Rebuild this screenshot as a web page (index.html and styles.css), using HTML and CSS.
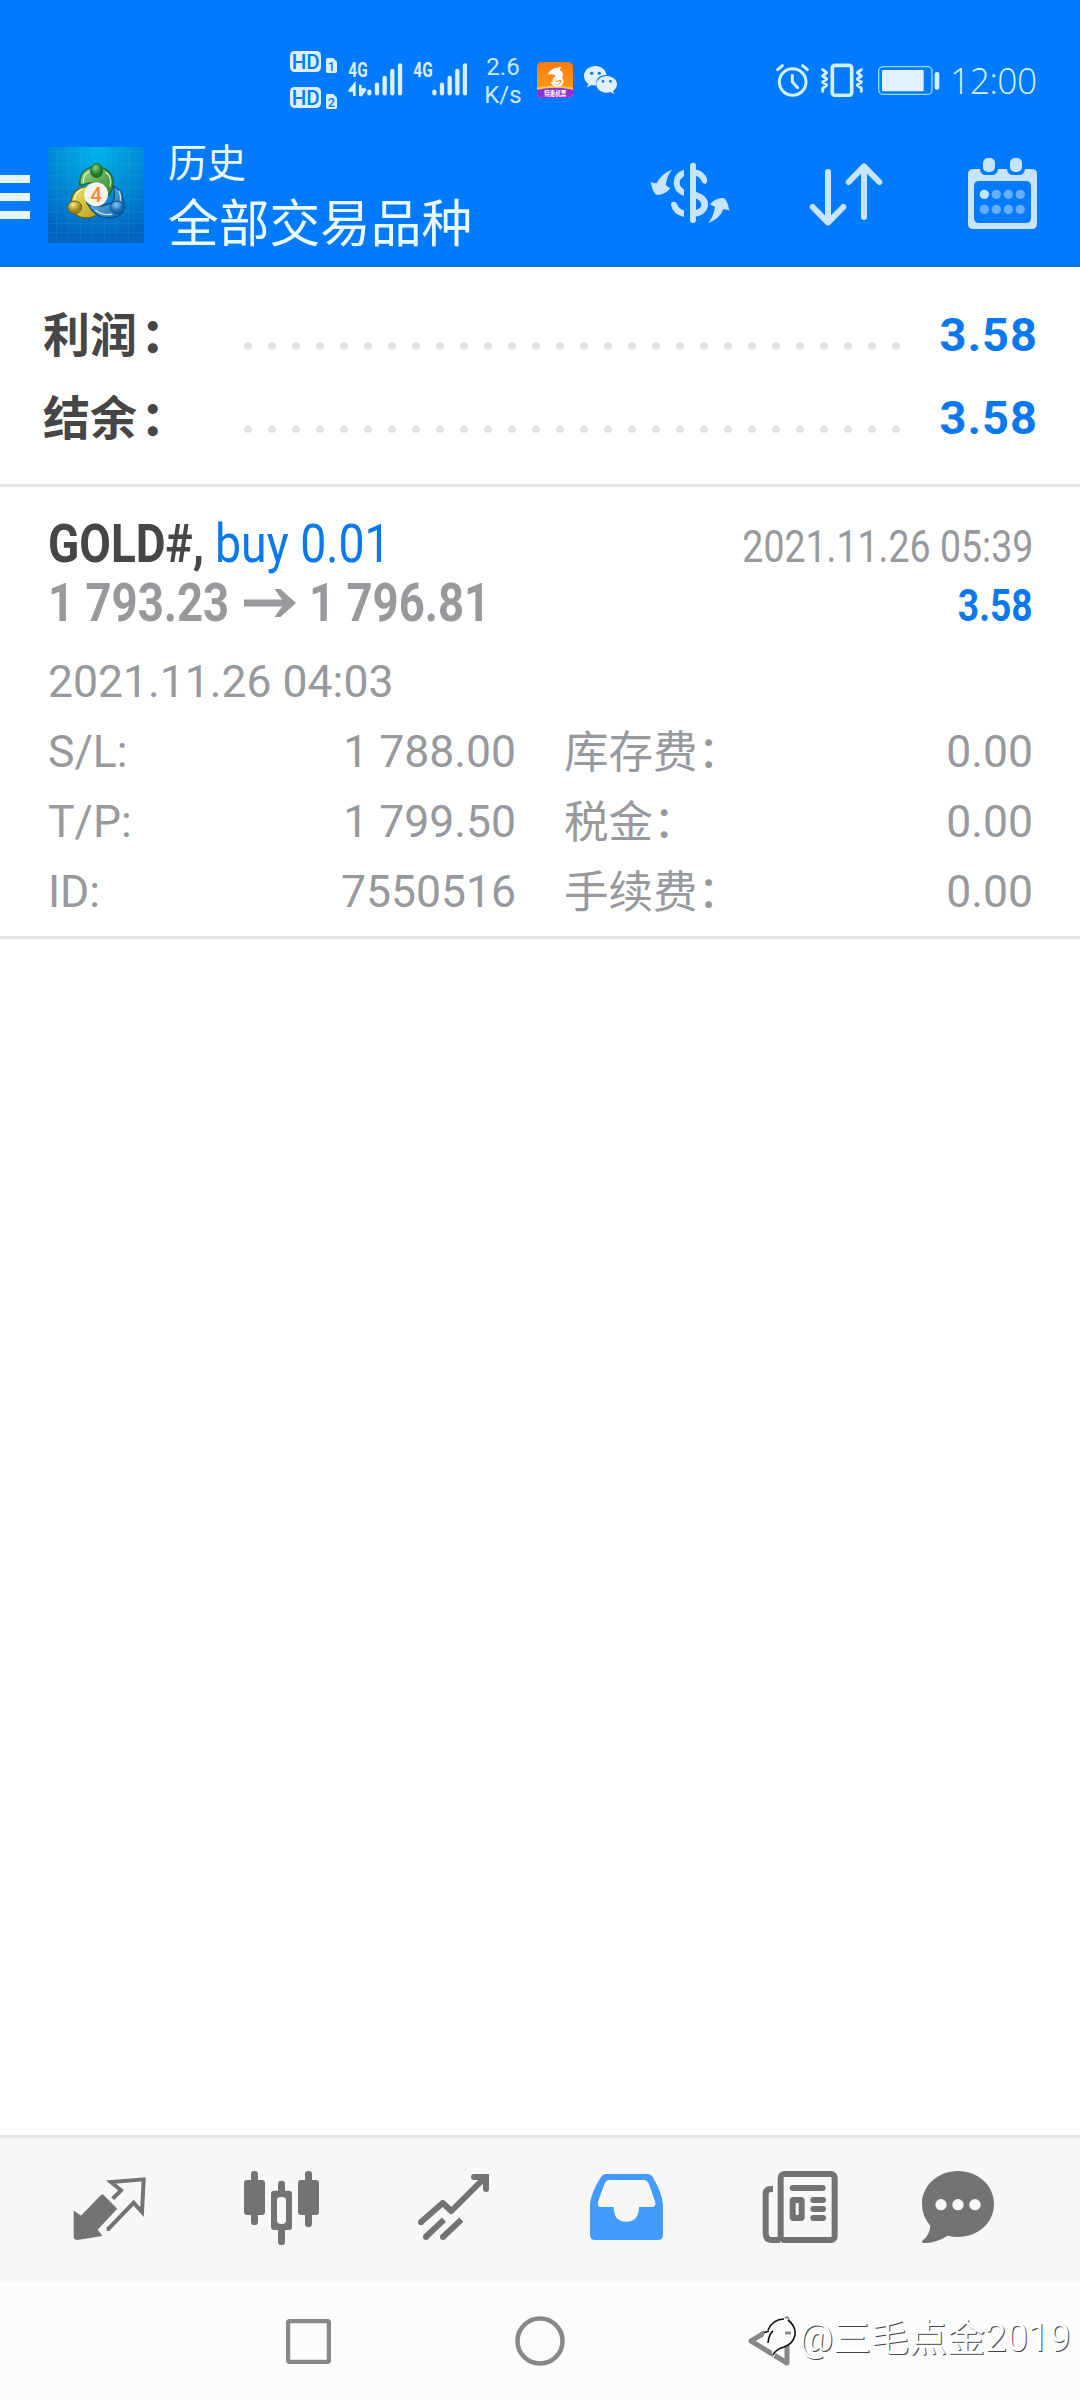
FILE: index.html
```html
<!DOCTYPE html>
<html lang="zh-CN">
<head>
<meta charset="utf-8">
<title>历史</title>
<link rel="stylesheet" href="styles.css">
</head>
<body>
<div class="screen">
  <div class="statusbar">
    <svg class="signals" width="177" height="60" viewBox="60 30 531 180">
      <g fill="#dcefff">
        <rect x="60" y="33" width="93" height="63" rx="14"/>
        <rect x="60" y="141" width="93" height="63" rx="14"/>
        <path d="M172 54h18l11 12v28q0 5-5 5h-23q-5 0-5-5V59q0-5 4-5z"/>
        <path d="M172 162h18l11 12v28q0 5-5 5h-23q-5 0-5-5v-35q0-5 4-5z"/>
      </g>
      <g class="hd" fill="#007aff">
        <text x="65" y="86" font-size="59" textLength="84" lengthAdjust="spacingAndGlyphs">HD</text>
        <text x="65" y="194" font-size="59" textLength="84" lengthAdjust="spacingAndGlyphs">HD</text>
        <text x="173" y="93" font-size="38">1</text>
        <text x="173" y="200" font-size="38">2</text>
      </g>
      <g class="net" fill="#dcefff">
        <text x="235" y="112" font-size="58" textLength="58" lengthAdjust="spacingAndGlyphs">4G</text>
        <text x="430" y="112" font-size="58" textLength="58" lengthAdjust="spacingAndGlyphs">4G</text>
      </g>
      <path d="M237 155l16-21v34M271 134v34M271 168l16-21" fill="none" stroke="#dcefff" stroke-width="8"/>
      <path d="M237 147h16v8h-16zM271 145h16v8h-16z" fill="#dcefff"/>
      <g stroke="#dcefff" stroke-width="13" stroke-linecap="round">
        <path d="M298 155v5M321 134v26M344 114v46M367 93v67M390 76v84"/>
        <path d="M493 155v5M516 134v26M539 114v46M562 93v67M585 76v84"/>
      </g>
    </svg>
    <div class="rate"><span>2.6</span><span>K/s</span></div>
    <svg class="app" width="36" height="36" viewBox="0 0 108 108">
      <defs><linearGradient id="trip" x2="0" y2="1"><stop offset="0" stop-color="#f97a10"/><stop offset="1" stop-color="#ffa51c"/></linearGradient>
      <clipPath id="tripclip"><rect width="108" height="108" rx="15"/></clipPath></defs>
      <g clip-path="url(#tripclip)">
        <rect width="108" height="108" fill="url(#trip)"/>
        <path d="M0 78q54-15 108 0v30H0z" fill="#ffc65c"/>
        <path d="M0 83q54-12 108 0v25H0z" fill="#8a35d8"/>
      </g>
      <path d="M32 38Q40 18 62 17l11-3-5 9q14 8 8 24-3 7-11 8-7 1-10 6 3-12-1-22-10-4-22-1z" fill="#fff"/>
      <path d="M64 45q-16 1-14 15 9 8 18-1M64 46q14 4 12 15-5 11-17 10-13-1-14-11" fill="none" stroke="#fff" stroke-width="6"/>
      <text class="trip" x="22" y="101" font-size="20" textLength="66" lengthAdjust="spacingAndGlyphs" fill="#fff">特惠机票</text>
    </svg>
    <svg class="wechat" width="33" height="28" viewBox="0 0 99 84">
      <path d="M35 0C15 0 0 13 0 30c0 10 5 18 13 23l-4 11 14-7q7 2 15 1C32 37 49 26 68 27 65 11 51 0 35 0z" fill="#e2f1ff"/>
      <path d="M68 30c-18 0-31 11-31 25s13 25 31 25q6 0 11-2l11 6-3-9c8-5 12-12 12-20 0-14-13-25-31-25z" fill="#e2f1ff"/>
      <g fill="#007aff"><circle cx="23" cy="22" r="5"/><circle cx="46" cy="22" r="5"/><circle cx="57" cy="46" r="4"/><circle cx="79" cy="46" r="4"/></g>
    </svg>
    <svg class="alarm" width="33" height="34" viewBox="48 66 99 102" fill="none" stroke="#d3f0ff" stroke-width="9" stroke-linecap="round" stroke-linejoin="round">
      <circle cx="98" cy="123" r="40"/><path d="M97 103v20l16 17M53 86l14-12M142 86l-14-12"/>
    </svg>
    <svg class="vibrate" width="44" height="34" viewBox="180 66 132 102" fill="none" stroke="#d3f0ff" stroke-linecap="round" stroke-linejoin="round">
      <rect x="217" y="73" width="58" height="90" rx="8" stroke-width="11"/>
      <path d="M188 86l12 9-12 10 12 9-12 9 12 9-12 10 0 9M304 86l-12 9 12 10-12 9 12 9-12 9 12 10v9" stroke-width="9"/>
    </svg>
    <svg class="battery" width="62" height="29" viewBox="355 74 186 87">
      <rect x="357" y="76" width="160" height="83" rx="13" fill="none" stroke="#9dd3ff" stroke-width="4"/>
      <rect x="367" y="86" width="125" height="64" rx="3" fill="#e2f1ff"/><rect x="525" y="92" width="14" height="53" rx="6" fill="#d3f0ff"/>
    </svg>
    <div class="clock">12:00</div>
  </div>

  <header class="header">
    <div class="menu"><i></i><i></i><i></i></div>
    <svg class="logo" width="96" height="96" viewBox="144 51 288 288">
      <defs>
        <radialGradient id="sky" gradientUnits="userSpaceOnUse" cx="290" cy="60" r="270"><stop offset="0" stop-color="#00b4ec"/><stop offset=".45" stop-color="#008fd8"/><stop offset="1" stop-color="#0064c0"/></radialGradient>
        <linearGradient id="lg" x2="1" y2="1"><stop offset="0" stop-color="#a5d68c"/><stop offset="1" stop-color="#27842c"/></linearGradient>
        <linearGradient id="ly" x2="1" y2="1"><stop offset="0" stop-color="#f4e96b"/><stop offset="1" stop-color="#b79b1c"/></linearGradient>
        <linearGradient id="lb" x2="1" y2="1"><stop offset="0" stop-color="#7cc5ef"/><stop offset="1" stop-color="#1068b4"/></linearGradient>
        <radialGradient id="bg" cx=".4" cy=".3"><stop offset="0" stop-color="#8fd07c"/><stop offset="1" stop-color="#1d7a26"/></radialGradient>
        <radialGradient id="by" cx=".4" cy=".3"><stop offset="0" stop-color="#f3e982"/><stop offset="1" stop-color="#99851a"/></radialGradient>
        <radialGradient id="bb" cx=".4" cy=".3"><stop offset="0" stop-color="#83cdf5"/><stop offset="1" stop-color="#1668ae"/></radialGradient>
      </defs>
      <rect x="144" y="51" width="288" height="288" fill="url(#sky)"/>
      <path d="M170 51v288M206 51v288M242 51v288M278 51v288M314 51v288M350 51v288M386 51v288M144 65h288M144 101h288M144 137h288M144 173h288M144 209h288M144 245h288M144 281h288M144 307h288" stroke="#5ac4ee" stroke-opacity=".2" stroke-width="2"/>
      <path d="M262 169q-30 3-42 24-11 22-4 45 12 27 45 26 20-2 29-10l-30-34z" fill="url(#ly)" stroke="#69611a" stroke-width="4"/>
      <path d="M340 168q28 14 29 41 6 24-3 41-20 18-57 12-30-9-43-37l40 3 32-10q10-22 2-50z" fill="url(#lb)" stroke="#0a4f94" stroke-width="4"/>
      <path d="M240 166q-4-34 20-48 26-16 53-2 29 15 26 49-3 22-15 32l-10-26-30-14-25 4z" fill="url(#lg)" stroke="#1b6b25" stroke-width="4"/>
      <path d="M250 160q-1-28 18-35M330 170q8-28-13-43M224 213q0-28 24-36M286 240q22 19 51 12M356 182q8 13 5 32" fill="none" stroke="#e5f5d5" stroke-opacity=".8" stroke-width="4"/>
      <ellipse cx="290" cy="122" rx="18" ry="21" fill="url(#bg)" stroke="#1b6b25" stroke-width="3"/>
      <ellipse cx="224" cy="232" rx="21" ry="19" fill="url(#by)" stroke="#69611a" stroke-width="3"/>
      <ellipse cx="352" cy="232" rx="21" ry="19" fill="url(#bb)" stroke="#0a4f94" stroke-width="3"/>
      <circle cx="288" cy="193" r="36" fill="#f6f3f0"/>
      <text class="four" x="271" y="216" font-size="62" fill="#f58a2c">4</text>
    </svg>
    <div class="titles"><div class="title-sm">历史</div><div class="title-lg">全部交易品种</div></div>
    <svg class="act-money" width="80" height="75" viewBox="60 75 240 225" fill="#c9e4ff">
      <path d="M62 155q8 5 18 5 14-30 46-41-14 14-19 46 6 6 14 10-14 19-39 20-13-2-20-40z"/>
      <path d="M298 242q-8-4-18-4-12 30-46 41 16-17 21-48-6-3-15-8 14-18 39-20 13 4 19 39z"/>
      <path d="M189 107v163" stroke="#c9e4ff" stroke-width="18" stroke-linecap="round"/>
      <path d="M162 119v20q-13 8-13 19 0 12 13 20v20q-31-12-31-40 0-29 31-39zM162 261q-34-8-39-36-1-9 8-10 7 0 10 7 6 16 21 19zM189 117q38 4 43 34 0 8-7 11-7 0-10-8-7-17-26-19zM189 184q44 9 45 39-1 33-45 39v-20q25-3 25-19-1-15-25-20z"/>
    </svg>
    <svg class="act-sort" width="75" height="75" viewBox="534 75 225 225" fill="none" stroke="#c9e4ff" stroke-width="18" stroke-linecap="round" stroke-linejoin="round">
      <path d="M594 126v151M548 231l46 47 46-47M702 261V110M656 156l46-47 46 47"/>
    </svg>
    <svg class="act-cal" width="71" height="75" viewBox="1011 75 213 225">
      <path fill-rule="evenodd" d="M1030 117h20q2 18 18 18h18q16 0 18-18h27q2 18 18 18h18q16 0 18-18h20q16 0 16 16v148q0 16-16 16h-175q-16 0-16-16V133q0-16 16-16zM1048 153q-16 0-16 16v94q0 16 16 16h139q16 0 16-16v-94q0-16-16-16z" fill="#c9e4ff"/>
      <rect x="1059" y="84" width="36" height="42" rx="15" fill="#c9e4ff"/><rect x="1140" y="84" width="36" height="42" rx="15" fill="#c9e4ff"/>
      <circle cx="1063" cy="193" r="14" fill="#c9e4ff"/>
      <g fill="#66aeff"><circle cx="1099" cy="193" r="14"/><circle cx="1135" cy="193" r="14"/><circle cx="1171" cy="193" r="14"/><circle cx="1063" cy="238" r="14"/><circle cx="1099" cy="238" r="14"/><circle cx="1135" cy="238" r="14"/><circle cx="1171" cy="238" r="14"/></g>
    </svg>
  </header>

  <section class="summary">
    <div class="sum-row"><span class="sum-label">利润<b>：</b></span><span class="dots"></span><span class="sum-value">3.58</span></div>
    <div class="sum-row"><span class="sum-label">结余<b>：</b></span><span class="dots"></span><span class="sum-value">3.58</span></div>
  </section>

  <section class="deal">
    <div class="deal-line">
      <div class="side"><span class="symbol">GOLD#,</span><span class="volume">buy 0.01</span></div>
      <span class="close-time">2021.11.26 05:39</span>
    </div>
    <div class="deal-line">
      <div class="side prices"><span class="price">1 793.23</span>
        <svg class="arrow" width="52" height="28" viewBox="0 0 52 28"><path d="M0 10.500h38L30.500 0h6L52 14 36.500 28h-6L38 17.500H0z" fill="#98999d"/></svg>
        <span class="price">1 796.81</span></div>
      <span class="profit">3.58</span>
    </div>
    <div class="open-time">2021.11.26 04:03</div>
    <div class="grid">
      <span>S/L:</span><span class="num">1 788.00</span><span class="cjk">库存费：</span><span class="num">0.00</span>
      <span>T/P:</span><span class="num">1 799.50</span><span class="cjk">税金：</span><span class="num">0.00</span>
      <span>ID:</span><span class="num">7550516</span><span class="cjk">手续费：</span><span class="num">0.00</span>
    </div>
  </section>

  <main class="empty"></main>

  <nav class="tabs">
    <svg class="t1" width="74" height="75" viewBox="99 150 222 225">
      <path d="M190 225l41 41-59 63 14 18-76 12q-8-1-8-8V273l21 15 61-63z" fill="#737373" stroke="#737373" stroke-width="2" stroke-linejoin="round"/>
      <path d="M218 236l25-25-30-25 98-8-5 98-25-28-76 79h-5" fill="none" stroke="#737373" stroke-width="12"/>
    </svg>
    <svg class="t2" width="77" height="75" viewBox="609 150 231 225">
      <g fill="#737373"><rect x="612" y="180" width="63" height="105" rx="9"/><rect x="774" y="180" width="63" height="105" rx="9"/><rect x="633" y="153" width="21" height="162" rx="10"/><rect x="795" y="153" width="21" height="168" rx="10"/><rect x="714" y="182" width="21" height="40" rx="10"/><rect x="714" y="320" width="21" height="55" rx="10"/></g>
      <path fill-rule="evenodd" fill="#737373" d="M702 212h45q9 0 9 9v100q0 9-9 9h-45q-9 0-9-9V221q0-9 9-9zM711 241v60q0 11 11 11h5q11 0 11-11v-60q0-10-11-10h-5q-11 0-11 10z"/>
    </svg>
    <svg class="t3" width="73" height="75" viewBox="1131 150 219 225" fill="none" stroke="#737373" stroke-width="18">
      <path d="M1143 306l65-57 26 24 98-98" stroke-linejoin="round"/><path d="M1302 171h36v36" stroke-linecap="round"/>
      <path d="M1157 351l55-52M1209 351l55-52"/>
      <g fill="#737373" stroke="none"><circle cx="1143" cy="307" r="9"/><circle cx="1158" cy="351" r="9"/><circle cx="1209" cy="351" r="9"/></g>
    </svg>
    <svg class="t4" width="73" height="75" viewBox="150 150 219 225">
      <path fill-rule="evenodd" fill="#439bff" d="M198 162h124q12 0 18 12 27 48 29 80v90q0 16-16 16H166q-16 0-16-16v-90q2-34 31-80 7-12 17-12zM210 180q-12 0-17 13l-19 52q-2 14 6 16h41q0 44 37 44 39 0 39-44h41q10-2 8-14l-19-54q-5-13-16-13z"/>
    </svg>
    <svg class="t5" width="76" height="75" viewBox="666 150 228 225" fill="none" stroke="#737373" stroke-width="18">
      <rect x="722" y="162" width="162" height="198" rx="11"/><path d="M699 207h-7q-15 0-15 15v118q0 20 18 20h25"/>
      <path d="M758 204h90M820 240h29M820 267h29M820 294h29" stroke-linecap="round"/><rect x="758" y="240" width="27" height="54" rx="2"/>
    </svg>
    <svg class="t6" width="72" height="75" viewBox="1146 150 216 225">
      <path d="M1254 153c60 0 108 43 108 99s-48 99-108 99q-16 0-31-4-30 20-69 22-11 0-7-7 22-16 24-45-25-28-25-65c0-56 48-99 108-99z" fill="#737373"/>
      <g fill="#f7f7f7"><circle cx="1203" cy="254" r="17"/><circle cx="1254" cy="254" r="17"/><circle cx="1305" cy="254" r="17"/></g>
    </svg>
  </nav>

  <div class="sysnav">
    <svg class="recent" width="45" height="45" viewBox="0 0 45 45"><rect x="2" y="2" width="41" height="41" rx="2" fill="none" stroke="#888" stroke-width="4.500"/></svg>
    <svg class="home" width="50" height="50" viewBox="0 0 50 50"><circle cx="25" cy="25" r="22.500" fill="none" stroke="#888" stroke-width="4.500"/></svg>
    <svg class="back" width="44" height="50" viewBox="0 0 44 50"><path d="M40 3v44L4 25z" fill="none" stroke="#888" stroke-width="5" stroke-linejoin="round"/></svg>
    <div class="watermark">
      <svg width="34" height="44" viewBox="0 0 34 44">
        <path d="M14 2q17-2 18 15 0 14-17 15L9 42l-2-13Q-6 18 4 8z" fill="#fcfcfc"/>
        <path d="M4 14Q9 3 20 3M24 4q8 6 7 15-2 9-11 12-8 2-11 8M-1 17l6-2M4 27q1-9 5-12" fill="none" stroke="#111" stroke-width="1.600"/>
        <path d="M21 17h6" stroke="#888" stroke-width="3"/>
      </svg>
      <span>@三毛点金2019</span>
    </div>
  </div>
</div>
</body>
</html>
```
FILE: styles.css
```css
* { box-sizing: border-box; }
body { margin: 0; background: #fff; }
svg { display: block; flex: none; }
.screen {
  width: 1080px; height: 2400px; overflow: hidden;
  display: flex; flex-direction: column;
  font-family: Roboto, "Noto Sans CJK SC", sans-serif; color: #98999d;
}

/* status bar */
.statusbar { flex: none; height: 120px; padding: 40px 0 0 290px; display: flex; align-items: center; background: #007aff; }
.hd { font-family: Roboto, sans-serif; font-weight: 500; }
.net { font-family: Roboto, sans-serif; font-weight: 700; }
.rate { width: 42px; margin-left: 15px; height: 56px; display: flex; flex-direction: column; align-items: center; font-size: 24px; line-height: 28px; color: #cde8ff; margin-bottom: -2px; }
.app { margin-left: 13px; }
.trip { font-family: "Noto Sans CJK SC", sans-serif; font-weight: 700; }
.wechat { margin-left: 11px; }
.alarm { margin-left: 159px; }
.vibrate { margin-left: 11px; }
.battery { margin-left: 14px; }
.clock { margin-left: 10px; font: 300 37px/40px "Open Sans", sans-serif; letter-spacing: -.5px; color: #d3f0ff; transform: scaleX(.955); transform-origin: 0 0; }

/* header */
.header { flex: none; height: 147px; display: flex; align-items: flex-start; background: #007aff; border-bottom: 2px solid #1a6cc4; }
.menu { width: 30px; margin: 55px 18px 0 0; display: grid; gap: 10px; }
.menu i { height: 8px; background: #e8f6ff; }
.logo { margin-top: 27px; }
.four { font-family: Roboto, sans-serif; font-weight: 500; }
.titles { width: 324px; margin: 16px 0 0 24px; font-family: "Noto Sans CJK SC", sans-serif; color: #ecf9ff; white-space: nowrap; }
.title-sm { font-size: 39px; line-height: 48px; }
.title-lg { font-size: 50.700px; line-height: 73px; }
.act-money { margin: 35px 0 0 158px; }
.act-sort { margin: 35px 0 0 78px; }
.act-cal { margin: 35px 0 0 84px; }

/* totals */
.summary { flex: none; height: 220px; padding: 26px 42px 0 43px; border-bottom: 3px solid #e4e4e4; }
.sum-row { height: 83px; display: flex; align-items: center; }
.sum-label { width: 193px; padding-bottom: 6px; font: 700 47px/60px "Noto Sans CJK SC", sans-serif; color: #464646; white-space: nowrap; }
.sum-label b { margin-left: 4px; }
.dots { width: 672px; height: 24px; margin-top: 23px; background: radial-gradient(circle at center, #e4e4e4 3.500px, transparent 4.300px) 0 0 / 24px 24px; }
.sum-value { flex: 1; text-align: right; font-size: 47px; line-height: 60px; font-weight: 700; letter-spacing: 1px; color: #0a78ee; }

/* deal */
.deal { flex: none; height: 452px; padding: 27px 47px 0 48px; border-bottom: 3px solid #e4e4e4; font-size: 44.500px; white-space: nowrap; }
.deal-line { height: 59px; line-height: 59px; display: flex; justify-content: space-between; align-items: baseline; }
.side { display: flex; font-size: 54px; }
.symbol { width: 167px; font-weight: 700; color: #464646; transform: scaleX(.85); transform-origin: 0 0; }
.volume { color: #0a78ee; transform: scaleX(.86); transform-origin: 0 0; }
.close-time { font-size: 45px; transform: scaleX(.833); transform-origin: 100% 0; }
.prices { font-weight: 700; }
.price { width: 196px; transform: scaleX(.843); transform-origin: 0 0; }
.arrow { align-self: center; margin-right: 13px; }
.profit { font-size: 45px; font-weight: 700; color: #0a78ee; transform: scaleX(.825); transform-origin: 100% 0; }
.open-time { margin-top: 15px; line-height: 70px; }
.grid { display: grid; grid-template-columns: 120px 348px 150px 1fr; grid-auto-rows: 70px; line-height: 70px; }
.num { text-align: right; }
.cjk { padding-left: 48px; font-family: "Noto Sans CJK SC", sans-serif; font-weight: 400; font-size: 44.500px; line-height: 64px; }

.empty { flex: 1; }

/* tabs */
.tabs { flex: none; height: 147px; padding: 32px 0 0 73px; display: flex; background: #f7f7f7; border-top: 3px solid #e4e4e4; }
.t2 { margin-left: 96px; } .t3 { margin-left: 97px; } .t4 { margin-left: 100px; } .t5 { margin-left: 99px; } .t6 { margin-left: 84px; }

/* system navigation */
.sysnav { position: relative; flex: none; height: 118px; padding: 0 0 0 286px; display: flex; align-items: center; background: #fcfcfc; }
.home { margin-left: 184px; } .back { margin-left: 182px; }
.watermark { position: absolute; left: 764px; top: 34px; display: flex; align-items: center; gap: 1px; font-size: 38px; line-height: 44px; font-weight: 400; color: #fff; text-shadow: 1px 1px 0 #444; white-space: nowrap; }
```
